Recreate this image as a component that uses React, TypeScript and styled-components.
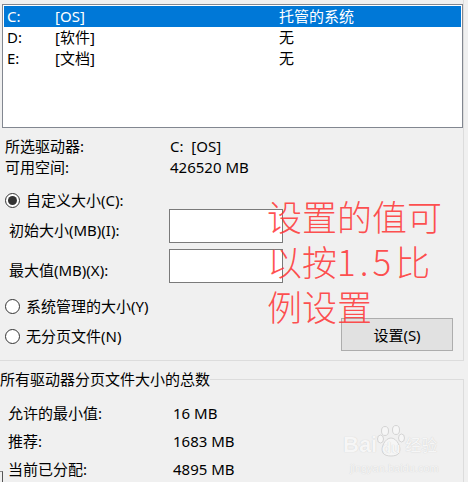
import React from "react";
import styled, { createGlobalStyle } from "styled-components";

const GlobalStyle = createGlobalStyle`
  *, *::before, *::after { box-sizing: border-box; }
  html, body { margin: 0; padding: 0; background: #f0f0f0; }
  body {
    font-family: "Noto Sans", "Noto Sans CJK SC", sans-serif;
    font-size: 15px;
    color: #000;
    overflow: hidden;
  }
`;

const Window = styled.div`
  position: relative;
  width: 468px;
  height: 482px;
  overflow: hidden;
  background: #f0f0f0;
`;

const TopGroup = styled.div`
  width: 464px;
  height: 361px;
  border-right: 1px solid #dcdcdc;
  border-bottom: 1px solid #dcdcdc;
  display: flex;
  flex-direction: column;
`;

const DriveList = styled.div`
  margin: 4px 0 0 2px;
  width: 461px;
  height: 124px;
  border: 1px solid #828790;
  background: #fff;
  padding: 1px;
`;

const DriveRow = styled.div<{ $selected?: boolean }>`
  display: grid;
  grid-template-columns: 48px 224px 1fr;
  height: 21px;
  line-height: 21px;
  padding-left: 3px;
  background: ${(p) => (p.$selected ? "#0078d7" : "transparent")};
  color: ${(p) => (p.$selected ? "#fff" : "#000")};
`;

const InfoGrid = styled.div`
  margin-top: 8px;
  padding-left: 5px;
  display: grid;
  grid-template-columns: 165px 1fr;
  line-height: 21px;
`;

const RadioRow = styled.div<{ $height: number; $gap: number }>`
  display: flex;
  align-items: center;
  gap: 6px;
  height: ${(p) => p.$height}px;
  margin-top: ${(p) => p.$gap}px;
  padding-left: 5px;
  line-height: 21px;
`;

const RadioCircle = styled.span<{ $checked?: boolean }>`
  width: 15px;
  height: 15px;
  border-radius: 50%;
  border: 1px solid #333;
  background: #fff;
  display: flex;
  align-items: center;
  justify-content: center;
  flex-shrink: 0;

  &::after {
    content: "";
    width: 9px;
    height: 9px;
    border-radius: 50%;
    background: ${(p) => (p.$checked ? "#333" : "transparent")};
  }
`;

const FieldRow = styled.div<{ $gap: number }>`
  display: flex;
  align-items: flex-end;
  height: 34px;
  margin-top: ${(p) => p.$gap}px;
  padding-left: 9px;
`;

const FieldLabel = styled.span`
  width: 160px;
  line-height: 21px;
  padding-bottom: 2px;
`;

const FieldInput = styled.div`
  width: 114px;
  height: 34px;
  border: 1px solid #7a7a7a;
  background: #fff;
`;

const BottomRow = styled.div`
  display: flex;
  align-items: center;
  justify-content: space-between;
  height: 33px;
  margin-top: 1px;
  padding: 0 10px 0 5px;
`;

const RadioLabel = styled.label`
  display: flex;
  align-items: center;
  gap: 6px;
  line-height: 21px;
  padding-top: 3px;
`;

const SetButton = styled.button`
  width: 112px;
  height: 33px;
  background: #e1e1e1;
  border: 1px solid #adadad;
  font: inherit;
  font-size: 15px;
  color: #000;
  padding: 0;
`;

const TotalsGroup = styled.fieldset`
  margin: 8px 0 0 -2px;
  width: 466px;
  border: 1px solid #dcdcdc;
  padding: 0;
  min-height: 140px;
`;

const Legend = styled.legend`
  padding: 0;
  margin-left: 1px;
  line-height: 21px;
`;

const TotalsGrid = styled.div`
  padding: 9px 0 0 9px;
  display: grid;
  grid-template-columns: 165px 1fr;
  grid-auto-rows: 28px;
  line-height: 28px;
`;

const RedNote = styled.div`
  position: absolute;
  left: 267px;
  top: 193px;
  font-family: "Noto Sans CJK SC", sans-serif;
  font-size: 35px;
  font-weight: 300;
  line-height: 45px;
  color: rgba(255, 50, 50, 0.85);
  white-space: nowrap;
  pointer-events: none;
`;

const Digits = styled.span`
  letter-spacing: 4px;
`;

const Watermark = styled.div`
  position: absolute;
  left: 343px;
  top: 424px;
  color: #f6f6f6;
  text-shadow: 0 0 1px #c8c8c8;
  pointer-events: none;
  font-family: "Liberation Sans", "Noto Sans CJK SC", sans-serif;
`;

const WmMain = styled.div`
  display: flex;
  align-items: flex-end;
  height: 34px;
  font-size: 22px;
  font-weight: bold;
  line-height: 26px;
`;

const Paw = styled.span`
  position: relative;
  width: 28px;
  height: 34px;
  display: flex;
  align-items: flex-end;
  justify-content: center;
  font-size: 15px;
  line-height: 20px;

  svg {
    position: absolute;
    left: 0;
    top: 0;
  }
`;

const WmCn = styled.span`
  font-size: 16px;
  font-weight: normal;
  line-height: 24px;
`;

const WmUrl = styled.div`
  font-size: 11px;
  line-height: 14px;
  margin: 3px 0 0 7px;
`;

const Corner = styled.div`
  position: absolute;
  left: 0;
  top: 471px;
  width: 3px;
  height: 11px;
  border-top: 1px solid #8a8a8a;
  border-right: 1px solid #555;
`;

const drives = [
  { letter: "C:", label: "[OS]", size: "托管的系统", selected: true },
  { letter: "D:", label: "[软件]", size: "无" },
  { letter: "E:", label: "[文档]", size: "无" },
];

const totals = [
  ["允许的最小值:", "16 MB"],
  ["推荐:", "1683 MB"],
  ["当前已分配:", "4895 MB"],
];

export default function App() {
  return (
    <>
      <GlobalStyle />
      <Window>
        <TopGroup>
          <DriveList>
            {drives.map((d) => (
              <DriveRow key={d.letter} $selected={d.selected}>
                <span>{d.letter}</span>
                <span>{d.label}</span>
                <span>{d.size}</span>
              </DriveRow>
            ))}
          </DriveList>

          <InfoGrid>
            <span>所选驱动器:</span>
            <span>C:&nbsp;&nbsp;[OS]</span>
            <span>可用空间:</span>
            <span>426520 MB</span>
          </InfoGrid>

          <RadioRow $height={17} $gap={14}>
            <RadioCircle $checked />
            <span>自定义大小(C):</span>
          </RadioRow>

          <FieldRow $gap={0}>
            <FieldLabel>初始大小(MB)(I):</FieldLabel>
            <FieldInput />
          </FieldRow>
          <FieldRow $gap={6}>
            <FieldLabel>最大值(MB)(X):</FieldLabel>
            <FieldInput />
          </FieldRow>

          <RadioRow $height={22} $gap={12}>
            <RadioCircle />
            <span>系统管理的大小(Y)</span>
          </RadioRow>

          <BottomRow>
            <RadioLabel>
              <RadioCircle />
              <span>无分页文件(N)</span>
            </RadioLabel>
            <SetButton>设置(S)</SetButton>
          </BottomRow>
        </TopGroup>

        <TotalsGroup>
          <Legend>所有驱动器分页文件大小的总数</Legend>
          <TotalsGrid>
            {totals.map(([k, v]) => (
              <React.Fragment key={k}>
                <span>{k}</span>
                <span>{v}</span>
              </React.Fragment>
            ))}
          </TotalsGrid>
        </TotalsGroup>

        <RedNote>
          <div>设置的值可</div>
          <div>
            以按<Digits>1.5</Digits>比
          </div>
          <div>例设置</div>
        </RedNote>

        <Watermark>
          <WmMain>
            <span>Bai</span>
            <Paw>
              <svg width="28" height="34" viewBox="0 0 28 34">
                <g fill="#f6f6f6" stroke="#cccccc" strokeWidth="0.8">
                  <ellipse cx="8" cy="7" rx="3.5" ry="4.5" />
                  <ellipse cx="19" cy="6" rx="3.5" ry="4.5" />
                  <ellipse cx="3.5" cy="15" rx="3" ry="4" />
                  <ellipse cx="24.5" cy="14" rx="3" ry="4" />
                  <path d="M14 14 C8 14 3 24 6 29 C8 33 20 33 22 29 C25 24 20 14 14 14 Z" />
                </g>
              </svg>
              <span style={{ position: "relative" }}>du</span>
            </Paw>
            <WmCn>经验</WmCn>
          </WmMain>
          <WmUrl>jingyan.baidu.com</WmUrl>
        </Watermark>

        <Corner />
      </Window>
    </>
  );
}
